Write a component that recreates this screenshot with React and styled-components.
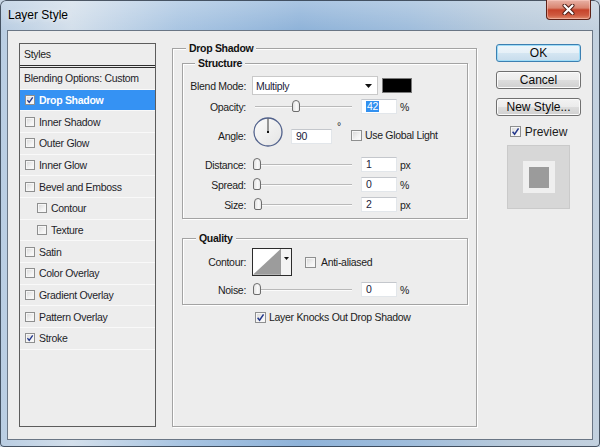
import React from "react";
import styled, { createGlobalStyle } from "styled-components";

const GlobalStyle = createGlobalStyle`
  html, body {
    margin: 0;
    padding: 0;
    background: #c7d5e4;
  }
  body {
    font-family: "Liberation Sans", Arial, sans-serif;
    font-size: 10.5px;
    letter-spacing: -0.3px;
    color: #1c1c1c;
  }
`;

const BG = "#ededed";

const Window = styled.div`
  width: 600px;
  height: 447px;
  box-sizing: border-box;
  display: flex;
  flex-direction: column;
  padding: 0 7px 7px 7px;
  border-radius: 6px 6px 4px 4px;
  background:
    linear-gradient(180deg, rgba(255,255,255,0.25) 0%, rgba(255,255,255,0) 30px),
    linear-gradient(90deg, #b9cde2 0%, #d3dfeb 12%, #a9c5e2 30%, #8fb3d9 50%, #9fbddc 68%, #b8cadb 85%, #c3d1df 100%);
  box-shadow: inset 0 0 0 1px rgba(30, 40, 55, 0.75);
`;

const TitleBar = styled.div`
  height: 30px;
  display: flex;
  justify-content: space-between;
  align-items: flex-start;
`;

const Title = styled.div`
  margin-top: 8px;
  margin-left: 1px;
  font-size: 12px;
  letter-spacing: 0;
  color: #000;
  text-shadow: 0 0 6px rgba(255, 255, 255, 0.9);
`;

const CloseButton = styled.div`
  width: 45px;
  height: 20px;
  margin-right: 2px;
  box-sizing: border-box;
  border: 1px solid #5e2217;
  border-top: none;
  border-radius: 0 0 4px 4px;
  background: linear-gradient(180deg, #e8b2a6 0%, #d98470 42%, #c6432a 52%, #cf5a40 80%, #e08b6c 100%);
  box-shadow: inset 0 0 0 1px rgba(255, 210, 200, 0.5);
  display: flex;
  align-items: center;
  justify-content: center;
`;

const Client = styled.div`
  flex: 1;
  display: flex;
  align-items: flex-start;
  padding: 12px 0 0 11px;
  background: ${BG};
  border: 1px solid #6a7685;
`;

/* ---------- left styles list ---------- */

const StylesPanel = styled.div`
  width: 137px;
  height: 384px;
  box-sizing: border-box;
  flex-shrink: 0;
  border: 1px solid #5c5c5c;
  background: ${BG};
  display: flex;
  flex-direction: column;
`;

const PanelHeader = styled.div`
  height: 21px;
  line-height: 21px;
  padding-left: 4px;
  border-bottom: 3px double #2e2e2e;
`;

const ListRow = styled.div`
  height: 21.67px;
  box-sizing: border-box;
  display: flex;
  align-items: center;
  padding-left: ${(p) => (p.$indent ? 17 : p.$plain ? 4 : 5)}px;
  border-bottom: 1px solid #f9f9f9;
  background: ${(p) => (p.$active ? "#3592f3" : "transparent")};
  color: ${(p) => (p.$active ? "#fff" : "#1e1e2a")};
  font-weight: ${(p) => (p.$active ? "bold" : "normal")};
  white-space: nowrap;
`;

const RowText = styled.span`
  margin-left: 4px;
`;

/* ---------- checkbox ---------- */

const Box = styled.span`
  width: ${(p) => p.$size}px;
  height: ${(p) => p.$size}px;
  box-sizing: border-box;
  flex-shrink: 0;
  display: inline-flex;
  align-items: center;
  justify-content: center;
  border: 1px solid #8e8f8f;
  background: linear-gradient(135deg, #d6d6d6 0%, #f2f2f2 60%, #fdfdfd 100%);
  box-shadow: inset 0 0 0 1px #f6f6f6;
  margin-left: ${(p) => p.$ml || 0}px;
`;

function Check({ checked, size = 10, ml }) {
  return (
    <Box $size={size} $ml={ml}>
      {checked && (
        <svg width={size - 2} height={size - 2} viewBox="0 0 10 10">
          <path d="M1.8 5.2 L4 8 L8.4 1.6" fill="none" stroke="#24388c" strokeWidth="1.7" />
        </svg>
      )}
    </Box>
  );
}

/* ---------- middle group ---------- */

const GroupBox = styled.div`
  display: flex;
  flex-direction: column;
  border: 1px solid #a3a3a3;
  box-shadow: inset 1px 1px 0 #fff, 1px 1px 0 #fff;
  box-sizing: border-box;
`;

const MainGroup = styled(GroupBox)`
  width: 305px;
  height: 379px;
  margin: 5px 0 0 16px;
  flex-shrink: 0;
`;

const SubGroup = styled(GroupBox)`
  margin: ${(p) => p.$mt}px 8px 0 9px;
  padding-bottom: ${(p) => p.$pb}px;
`;

const Legend = styled.div`
  align-self: flex-start;
  height: 13px;
  line-height: 13px;
  margin: -7px 0 0 ${(p) => p.$ml}px;
  padding: 0 3px;
  background: ${BG};
  font-weight: bold;
  color: #111;
`;

const Row = styled.div`
  display: flex;
  align-items: center;
  height: ${(p) => p.$h}px;
  margin-top: ${(p) => p.$mt}px;
  white-space: nowrap;
`;

const Label = styled.span`
  width: 63px;
  flex-shrink: 0;
  text-align: right;
  margin-top: ${(p) => p.$mt || 0}px;
`;

const Select = styled.div`
  width: 126px;
  height: 19px;
  box-sizing: border-box;
  margin-left: 6px;
  background: #fff;
  border: 1px solid #c9c9c9;
  display: flex;
  align-items: center;
  justify-content: space-between;
  padding: 0 5px 0 3px;
  color: #1c1c3a;
`;

const Swatch = styled.div`
  width: 30px;
  height: 15px;
  box-sizing: border-box;
  margin-left: 4px;
  background: #000;
  border: 1px solid #7a7a7a;
`;

const SliderWrap = styled.div`
  position: relative;
  width: 100px;
  height: 13px;
  margin-left: 6px;
  flex-shrink: 0;
`;

const Track = styled.div`
  position: absolute;
  left: 3px;
  width: 97px;
  top: 6px;
  height: 1px;
  background: #b9b9b9;
  box-shadow: 0 1px 0 #fbfbfb;
`;

const Thumb = styled.div`
  position: absolute;
  top: 0;
  width: 8px;
  height: 12px;
  box-sizing: border-box;
  border: 1px solid #6d6d6d;
  border-radius: 4px 4px 2px 2px;
  background: linear-gradient(90deg, #e2e2e2 0%, #fafafa 60%, #e8e8e8 100%);
`;

function Slider({ value, max }) {
  return (
    <SliderWrap>
      <Track />
      <Thumb style={{ left: 1 + (value / max) * 93 }} />
    </SliderWrap>
  );
}

const Field = styled.div`
  width: ${(p) => p.$w || 36}px;
  height: 15px;
  box-sizing: border-box;
  flex-shrink: 0;
  margin-left: ${(p) => (p.$ml === undefined ? 9 : p.$ml)}px;
  margin-top: ${(p) => p.$mt || 0}px;
  padding-left: 4px;
  background: #fff;
  border: 1px solid #e2e6ea;
  border-top-color: #c4c7cc;
  line-height: 13px;
  color: #1c1c3a;
`;

const Selected = styled.span`
  background: #3391f0;
  color: #fff;
  padding: 0 1px;
  display: inline-block;
  line-height: 11px;
`;

const Unit = styled.span`
  margin-left: 3px;
`;

const Degree = styled.span`
  margin: 0 0 12px 5px;
`;

const CheckLabel = styled.span`
  margin-left: ${(p) => p.$ml || 3}px;
  margin-top: ${(p) => p.$mt || 0}px;
`;

const InlineCheck = styled.span`
  display: inline-flex;
  margin-left: ${(p) => p.$ml}px;
  margin-top: ${(p) => p.$mt || 0}px;
`;

const DialBox = styled.div`
  width: 30px;
  height: 30px;
  margin-left: 7px;
  flex-shrink: 0;
`;

const ContourBox = styled.div`
  display: flex;
  width: 40px;
  height: 28px;
  box-sizing: border-box;
  margin-left: 6px;
  border: 1px solid #2c2c2c;
  background: #fff;
`;

const ContourArrow = styled.div`
  width: 11px;
  border-left: 1px solid #9a9a9a;
  background: #f3f3f3;
  display: flex;
  justify-content: center;
  padding-top: 8px;
  box-sizing: border-box;
`;

const KnockRow = styled.div`
  display: flex;
  align-items: center;
  margin-top: 6px;
  padding-left: 82px;
`;

/* ---------- right column ---------- */

const ButtonColumn = styled.div`
  width: 85px;
  margin: 1px 0 0 19px;
  display: flex;
  flex-direction: column;
  align-items: center;
  letter-spacing: 0;
`;

const Button = styled.div`
  width: 85px;
  height: 18px;
  box-sizing: border-box;
  margin-bottom: 9px;
  border: 1px solid ${(p) => (p.$default ? "#3c7fb1" : "#707070")};
  border-radius: 3px;
  background: ${(p) =>
    p.$default
      ? "linear-gradient(180deg, #eef6fb 0%, #e6f0f7 50%, #d5e6f2 51%, #c7dcec 100%)"
      : "linear-gradient(180deg, #f3f3f3 0%, #ebebeb 50%, #dddddd 51%, #d0d0d0 100%)"};
  box-shadow: inset 0 0 0 1px ${(p) => (p.$default ? "#9fdcf7" : "#fbfbfb")};
  font-size: 12px;
  color: #0a0a0a;
  display: flex;
  align-items: center;
  justify-content: center;
`;

const PreviewToggle = styled.div`
  display: flex;
  align-items: center;
  font-size: 12px;
  height: 13px;
`;

const PreviewBox = styled.div`
  width: 63px;
  height: 64px;
  margin-top: 7px;
  box-sizing: border-box;
  background: #d7d7d7;
  border: 1px solid #cacaca;
  display: flex;
  align-items: center;
  justify-content: center;
`;

const PreviewInner = styled.div`
  width: 32px;
  height: 32px;
  background: #efefef;
  display: flex;
  align-items: center;
  justify-content: center;
`;

const PreviewSquare = styled.div`
  width: 20px;
  height: 21px;
  background: #9b9b9b;
`;

const styleItems = [
  { name: "Drop Shadow", checked: true, active: true },
  { name: "Inner Shadow" },
  { name: "Outer Glow" },
  { name: "Inner Glow" },
  { name: "Bevel and Emboss" },
  { name: "Contour", indent: true },
  { name: "Texture", indent: true },
  { name: "Satin" },
  { name: "Color Overlay" },
  { name: "Gradient Overlay" },
  { name: "Pattern Overlay" },
  { name: "Stroke", checked: true },
];

function Dial() {
  return (
    <DialBox>
      <svg width="30" height="30" viewBox="0 0 30 30">
        <defs>
          <linearGradient id="dialFill" x1="0" y1="0" x2="1" y2="1">
            <stop offset="0" stopColor="#fbfbfb" />
            <stop offset="1" stopColor="#e4e4e4" />
          </linearGradient>
        </defs>
        <circle cx="15" cy="15" r="14" fill="url(#dialFill)" stroke="#52628c" strokeWidth="1.3" />
        <line x1="15" y1="1.5" x2="15" y2="15" stroke="#3a3a3a" strokeWidth="1" />
        <rect x="14" y="14" width="2" height="2" fill="#111" />
      </svg>
    </DialBox>
  );
}

export default function App() {
  return (
    <>
      <GlobalStyle />
      <Window>
        <TitleBar>
          <Title>Layer Style</Title>
          <CloseButton>
            <svg width="13" height="11" viewBox="0 0 13 11">
              <path d="M2.5 1.5 L10.5 9.5 M10.5 1.5 L2.5 9.5" stroke="#4a1a12" strokeWidth="4" strokeLinecap="round" />
              <path d="M2.5 1.5 L10.5 9.5 M10.5 1.5 L2.5 9.5" stroke="#fff" strokeWidth="2.2" strokeLinecap="round" />
            </svg>
          </CloseButton>
        </TitleBar>

        <Client>
          <StylesPanel>
            <PanelHeader>Styles</PanelHeader>
            <ListRow $plain>Blending Options: Custom</ListRow>
            {styleItems.map((item) => (
              <ListRow key={item.name} $active={item.active} $indent={item.indent}>
                <Check checked={item.checked} />
                <RowText>{item.name}</RowText>
              </ListRow>
            ))}
          </StylesPanel>

          <MainGroup>
            <Legend $ml={13}>Drop Shadow</Legend>

            <SubGroup $mt={8} $pb={6}>
              <Legend $ml={12}>Structure</Legend>
              <Row $h={19} $mt={6}>
                <Label>Blend Mode:</Label>
                <Select>
                  <span>Multiply</span>
                  <svg width="7" height="4" viewBox="0 0 7 4">
                    <path d="M0 0 H7 L3.5 4 Z" fill="#111" />
                  </svg>
                </Select>
                <Swatch />
              </Row>
              <Row $h={15} $mt={4}>
                <Label>Opacity:</Label>
                <Slider value={42} max={100} />
                <Field>
                  <Selected>42</Selected>
                </Field>
                <Unit>%</Unit>
              </Row>
              <Row $h={30} $mt={3}>
                <Label $mt={8}>Angle:</Label>
                <Dial />
                <Field $w={41} $ml={8} $mt={8}>90</Field>
                <Degree>°</Degree>
                <InlineCheck $ml={10} $mt={6}>
                  <Check size={11} />
                </InlineCheck>
                <CheckLabel $mt={6}>Use Global Light</CheckLabel>
              </Row>
              <Row $h={15} $mt={10}>
                <Label>Distance:</Label>
                <Slider value={1} max={250} />
                <Field>1</Field>
                <Unit>px</Unit>
              </Row>
              <Row $h={15} $mt={5}>
                <Label>Spread:</Label>
                <Slider value={0} max={100} />
                <Field>0</Field>
                <Unit>%</Unit>
              </Row>
              <Row $h={15} $mt={5}>
                <Label>Size:</Label>
                <Slider value={2} max={250} />
                <Field>2</Field>
                <Unit>px</Unit>
              </Row>
            </SubGroup>

            <SubGroup $mt={19} $pb={7}>
              <Legend $ml={13}>Quality</Legend>
              <Row $h={28} $mt={3}>
                <Label>Contour:</Label>
                <ContourBox>
                  <svg width="28" height="26" viewBox="0 0 28 26">
                    <path d="M0 26 L28 0 L28 26 Z" fill="#9c9c9c" />
                  </svg>
                  <ContourArrow>
                    <svg width="5" height="3" viewBox="0 0 5 3">
                      <path d="M0 0 H5 L2.5 3 Z" fill="#111" />
                    </svg>
                  </ContourArrow>
                </ContourBox>
                <InlineCheck $ml={13}>
                  <Check size={11} />
                </InlineCheck>
                <CheckLabel $ml={5}>Anti-aliased</CheckLabel>
              </Row>
              <Row $h={15} $mt={6}>
                <Label>Noise:</Label>
                <Slider value={0} max={100} />
                <Field>0</Field>
                <Unit>%</Unit>
              </Row>
            </SubGroup>

            <KnockRow>
              <Check checked size={11} />
              <CheckLabel $ml={3}>Layer Knocks Out Drop Shadow</CheckLabel>
            </KnockRow>
          </MainGroup>

          <ButtonColumn>
            <Button $default>OK</Button>
            <Button>Cancel</Button>
            <Button>New Style...</Button>
            <PreviewToggle>
              <Check checked size={11} />
              <CheckLabel $ml={4}>Preview</CheckLabel>
            </PreviewToggle>
            <PreviewBox>
              <PreviewInner>
                <PreviewSquare />
              </PreviewInner>
            </PreviewBox>
          </ButtonColumn>
        </Client>
      </Window>
    </>
  );
}
